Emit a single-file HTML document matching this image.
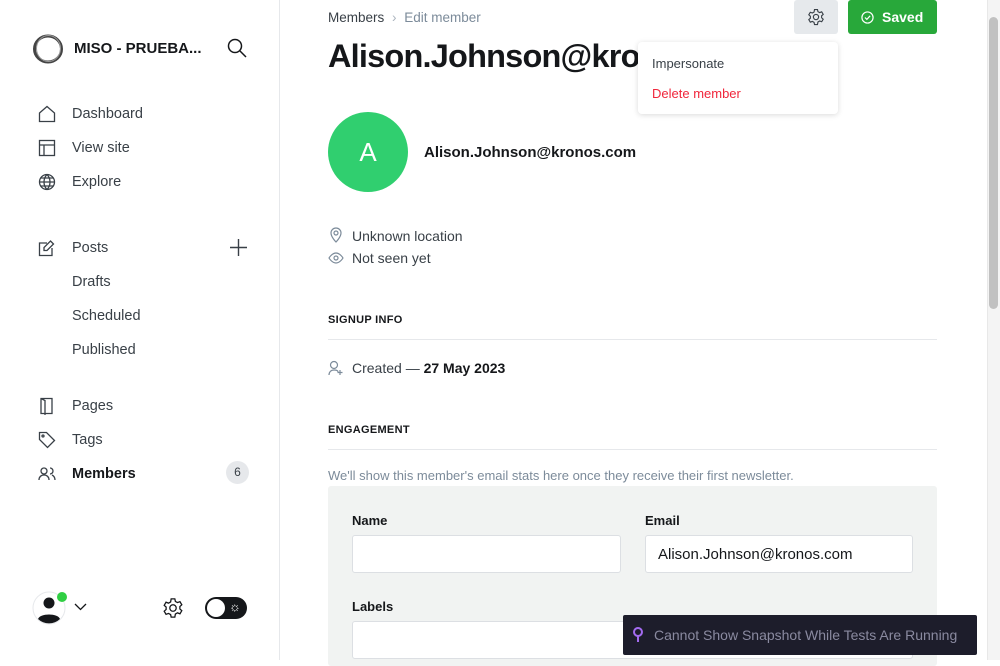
<!DOCTYPE html><html><head><style>
*{box-sizing:border-box;margin:0;padding:0}
body{width:1000px;height:660px;overflow:hidden;font-family:"Liberation Sans",sans-serif;background:#fff;position:relative;color:#15171a}
.side{position:absolute;left:0;top:0;width:280px;height:660px;border-right:1px solid #e6e8eb}
.nav{position:absolute;left:38px;font-size:14.5px;color:#394047;display:flex;align-items:center}
.nav svg{width:18px;height:18px;margin-right:16px;fill:none;stroke:#394047;stroke-width:1.3}
.sub{position:absolute;left:72px;font-size:14.5px;color:#394047}
.main{position:absolute;left:328px;top:0;width:609px}
.lbl{font-size:11px;font-weight:bold;letter-spacing:.3px;color:#15171a}
hr{border:0;border-top:1px solid #e6e8eb}
input{border:1px solid #dcdfe3;background:#fff;height:38px;border-radius:3px;font-family:inherit;font-size:15px;padding:0 12px;color:#15171a}
</style></head><body>
<div class="side">
<svg style="position:absolute;left:32px;top:33px" width="32" height="32" viewBox="0 0 32 32"><ellipse cx="16" cy="16" rx="13.5" ry="13" fill="none" stroke="#444" stroke-width="3"/><ellipse cx="16.5" cy="15.5" rx="12" ry="13" fill="none" stroke="#999" stroke-width="1"/></svg>
<div style="position:absolute;left:74px;top:40px;font-size:15px;font-weight:bold">MISO - PRUEBA...</div>
<svg style="position:absolute;left:227px;top:38px" width="20" height="20" viewBox="0 0 20 20" fill="none" stroke="#15171a" stroke-width="1.5"><circle cx="8" cy="8" r="6.5"/><path d="M13 13l6 6"/></svg>
<div class="nav" style="top:105px"><svg viewBox="0 0 18 18"><path d="M1.5 8L9 1.5 16.5 8v8.5h-15z"/></svg>Dashboard</div>
<div class="nav" style="top:139px"><svg viewBox="0 0 18 18"><rect x="1.5" y="1.5" width="15" height="15"/><path d="M1.5 6h15M6 6v10.5"/></svg>View site</div>
<div class="nav" style="top:173px"><svg viewBox="0 0 18 18"><circle cx="9" cy="9" r="7.5"/><path d="M1.5 9h15M9 1.5c-4 4-4 11 0 15M9 1.5c4 4 4 11 0 15M3 5h12M3 13h12"/></svg>Explore</div>
<div class="nav" style="top:239px"><svg viewBox="0 0 18 18"><path d="M14 9v7.5H1.5V4H9M12.5 2l3 3L9 11.5H6v-3z"/></svg>Posts</div>
<svg style="position:absolute;left:230px;top:239px" width="17" height="17" viewBox="0 0 17 17" stroke="#394047" stroke-width="1.4"><path d="M8.5 0v17M0 8.5h17"/></svg>
<div class="sub" style="top:274px">Drafts</div>
<div class="sub" style="top:308px">Scheduled</div>
<div class="sub" style="top:342px">Published</div>
<div class="nav" style="top:397px"><svg viewBox="0 0 18 18"><path d="M3 1.5h11v15H3zM3 1.5l4 2v15"/></svg>Pages</div>
<div class="nav" style="top:431px"><svg viewBox="0 0 18 18"><path d="M1.5 1.5h7l8 8-7 7-8-8z"/><circle cx="5" cy="5" r="1"/></svg>Tags</div>
<div class="nav" style="top:465px;font-weight:bold;color:#15171a"><svg viewBox="0 0 18 18"><circle cx="6" cy="6" r="3"/><path d="M1 15c0-3 2-5 5-5s5 2 5 5M12 3a3 3 0 010 6M14 10c2 1 3 3 3 5"/></svg>Members</div>
<div style="position:absolute;left:226px;top:461px;width:23px;height:23px;border-radius:12px;background:#e6e8eb;font-size:12px;text-align:center;line-height:23px;color:#394047">6</div>
<svg style="position:absolute;left:32px;top:591px" width="36" height="34" viewBox="0 0 36 34"><circle cx="17" cy="17" r="16" fill="#fff" stroke="#e6e8eb"/><circle cx="17" cy="12" r="5.5" fill="#15171a"/><path d="M6 28c2-6 20-6 22 0a16 16 0 01-22 0z" fill="#15171a"/><circle cx="30" cy="6" r="5" fill="#30cf43"/></svg>
<svg style="position:absolute;left:74px;top:603px" width="13" height="8" viewBox="0 0 13 8" fill="none" stroke="#15171a" stroke-width="1.3"><path d="M1 1l5.5 5.5L12 1"/></svg>
<svg style="position:absolute;left:162px;top:597px" width="22" height="22" viewBox="0 0 24 24" fill="none" stroke="#15171a" stroke-width="1.4"><circle cx="12" cy="12" r="3.5"/><path d="M10 2h4l.6 2.8 2.3 1.3 2.7-1 2 3.4-2.1 1.9v2.6l2.1 1.9-2 3.4-2.7-1-2.3 1.3L14 22h-4l-.6-2.8-2.3-1.3-2.7 1-2-3.4 2.1-1.9v-2.6L2.4 9.1l2-3.4 2.7 1 2.3-1.3z"/></svg>
<div style="position:absolute;left:205px;top:597px;width:42px;height:22px;border-radius:11px;background:#15171a"><div style="position:absolute;left:2px;top:2px;width:18px;height:18px;border-radius:9px;background:#fff"></div><div style="position:absolute;left:24px;top:2px;color:#fff;font-size:13px">☼</div></div>
</div>
<div class="main">
<div style="position:absolute;top:10px;font-size:13.5px;color:#394047">Members <span style="color:#abb4be;margin:0 4px">›</span> <span style="color:#7c8b9a">Edit member</span></div>
<div style="position:absolute;top:38px;font-size:32.5px;font-weight:bold;letter-spacing:-.8px;white-space:nowrap">Alison.Johnson@kronos.com</div>
<div style="position:absolute;left:0;top:112px;width:80px;height:80px;border-radius:40px;background:#30cf6f;color:#fff;font-size:26px;text-align:center;line-height:80px">A</div>
<div style="position:absolute;left:96px;top:144px;font-size:15px;font-weight:bold">Alison.Johnson@kronos.com</div>
<svg style="position:absolute;left:0;top:227px" width="16" height="16" viewBox="0 0 16 16" fill="none" stroke="#7c8b9a" stroke-width="1.2"><path d="M8 15s5-5 5-9A5 5 0 003 6c0 4 5 9 5 9z"/><circle cx="8" cy="6" r="2"/></svg>
<div style="position:absolute;left:24px;top:228px;font-size:14px;color:#394047">Unknown location</div>
<svg style="position:absolute;left:0;top:250px" width="16" height="16" viewBox="0 0 16 16" fill="none" stroke="#7c8b9a" stroke-width="1.2"><path d="M1 8s3-5 7-5 7 5 7 5-3 5-7 5-7-5-7-5z"/><circle cx="8" cy="8" r="2"/></svg>
<div style="position:absolute;left:24px;top:250px;font-size:14px;color:#394047">Not seen yet</div>
<div class="lbl" style="position:absolute;top:314px">SIGNUP INFO</div>
<hr style="position:absolute;top:339px;width:609px">
<svg style="position:absolute;left:0;top:360px" width="16" height="16" viewBox="0 0 16 16" fill="none" stroke="#7c8b9a" stroke-width="1.2"><circle cx="6" cy="5" r="3.5"/><path d="M1 15c0-3 2-5 5-5s4 1 4 2M12 10v5M9.5 12.5h5"/></svg>
<div style="position:absolute;left:24px;top:360px;font-size:14px;color:#394047">Created — <b style="color:#15171a">27 May 2023</b></div>
<div class="lbl" style="position:absolute;top:424px">ENGAGEMENT</div>
<hr style="position:absolute;top:449px;width:609px">
<div style="position:absolute;top:468px;font-size:13px;color:#7c8b9a">We'll show this member's email stats here once they receive their first newsletter.</div>
<div style="position:absolute;top:486px;width:609px;height:180px;background:#f1f3f2;border-radius:3px">
<div style="position:absolute;left:24px;top:27px;font-size:13px;font-weight:bold;color:#15171a">Name</div>
<input style="position:absolute;left:24px;top:49px;width:269px">
<div style="position:absolute;left:317px;top:27px;font-size:13px;font-weight:bold">Email</div>
<input style="position:absolute;left:317px;top:49px;width:268px" value="Alison.Johnson@kronos.com">
<div style="position:absolute;left:24px;top:113px;font-size:13px;font-weight:bold">Labels</div>
<input style="position:absolute;left:24px;top:135px;width:561px">
</div>
</div>
<div style="position:absolute;left:794px;top:0;width:44px;height:34px;background:#e6e9ec;border-radius:3px"></div>
<svg style="position:absolute;left:807px;top:8px" width="18" height="18" viewBox="0 0 24 24" fill="none" stroke="#394047" stroke-width="1.5"><circle cx="12" cy="12" r="3.5"/><path d="M10 2h4l.6 2.8 2.3 1.3 2.7-1 2 3.4-2.1 1.9v2.6l2.1 1.9-2 3.4-2.7-1-2.3 1.3L14 22h-4l-.6-2.8-2.3-1.3-2.7 1-2-3.4 2.1-1.9v-2.6L2.4 9.1l2-3.4 2.7 1 2.3-1.3z"/></svg>
<div style="position:absolute;left:848px;top:0;width:89px;height:34px;background:#28a83a;border-radius:3px;color:#fff;font-weight:bold;font-size:14px;line-height:34px;padding-left:34px">Saved</div>
<svg style="position:absolute;left:861px;top:11px" width="13" height="13" viewBox="0 0 14 14" fill="none" stroke="#fff" stroke-width="1.3"><circle cx="7" cy="7" r="6"/><path d="M4.3 7l2 2 3.5-3.8"/></svg>
<div style="position:absolute;left:638px;top:42px;width:200px;height:72px;background:#fff;border-radius:4px;box-shadow:0 1px 6px rgba(0,0,0,.15)">
<div style="position:absolute;left:14px;top:14px;font-size:13px;color:#394047">Impersonate</div>
<div style="position:absolute;left:14px;top:44px;font-size:13px;color:#f0263b">Delete member</div></div>
<div style="position:absolute;left:987px;top:0;width:13px;height:660px;background:#f4f4f4;border-left:1px solid #e8e8e8"></div>
<div style="position:absolute;left:989px;top:17px;width:9px;height:292px;background:#c1c1c1;border-radius:5px"></div>
<div style="position:absolute;left:623px;top:615px;width:354px;height:40px;background:#1d1d2b;border-radius:2px;color:#8a8aa0;font-size:14px;line-height:40px;padding-left:31px">Cannot Show Snapshot While Tests Are Running</div>
<svg style="position:absolute;left:633px;top:627px" width="10" height="15" viewBox="0 0 10 15"><circle cx="5" cy="5" r="4" fill="none" stroke="#a36bf0" stroke-width="2"/><path d="M5 9v6" stroke="#a36bf0" stroke-width="2"/></svg>
</body></html>
